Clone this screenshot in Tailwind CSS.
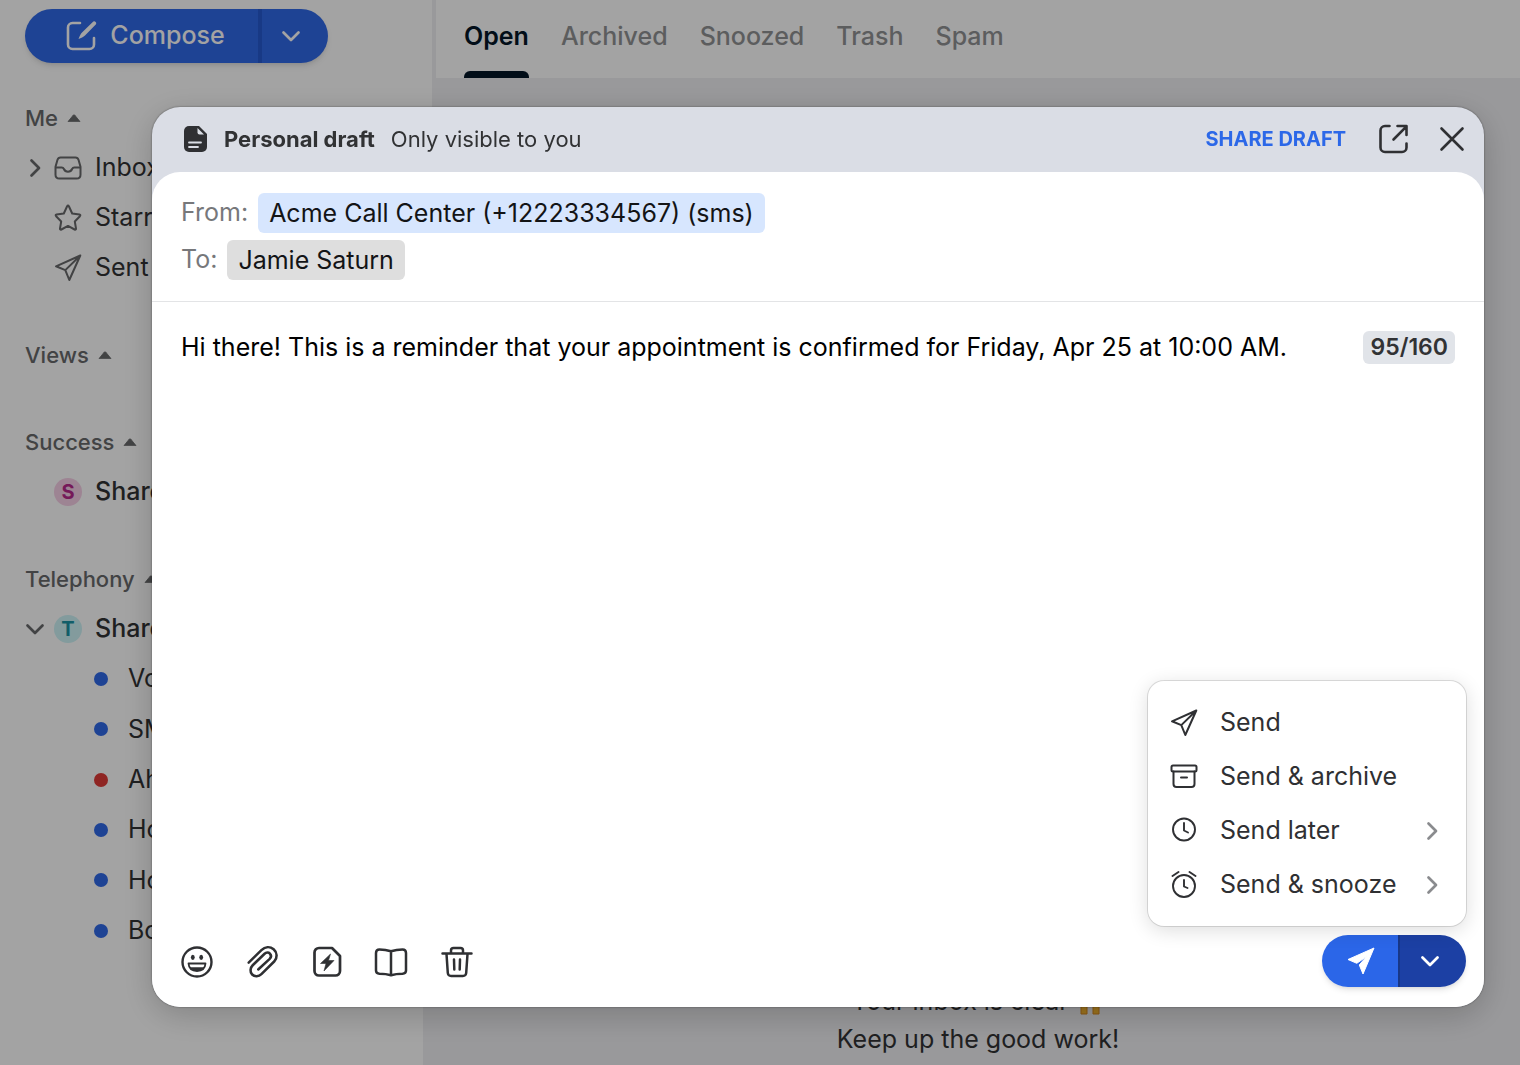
<!DOCTYPE html>
<html lang="en">
<head>
    <meta charset="UTF-8">
    <meta name="viewport" content="width=device-width, initial-scale=1.0">
    <title>Inbox</title>
    <script src="https://cdn.jsdelivr.net/npm/@tailwindcss/browser@4"></script>
</head>
<body class="bg-white font-['Inter',sans-serif] text-[25px] text-[#313234]">

<!-- shared icons -->
<svg class="hidden">
    <symbol id="chevron" viewBox="0 0 20 20"><path d="M2.5 6.5 10 14l7.5-7.5" fill="none" stroke="currentColor" stroke-width="2.7" stroke-linecap="round" stroke-linejoin="round"/></symbol>
    <symbol id="caret" viewBox="0 0 14 8"><path d="M1 7.6 6.2 1.2q.8-.8 1.6 0L13 7.6Z" fill="currentColor" stroke="currentColor" stroke-width=".8" stroke-linejoin="round"/></symbol>
    <symbol id="plane" viewBox="0 0 28 28"><path d="M26.300 1.500 2 12.300l9.300 3.800L15.300 26Z M26.300 1.500 11.300 16.100" fill="none" stroke="currentColor" stroke-width="2" stroke-linejoin="round"/></symbol>
</svg>

<div class="flex h-screen overflow-hidden">
    <aside class="w-[432px] shrink-0 pt-[9px] pl-[25px]">
        <div class="flex h-[54px] w-[303px] rounded-full bg-[#3069e8] text-white shadow-md">
            <button class="flex flex-1 items-center justify-center gap-3 border-r-4 border-[#265ad0] pl-2 text-[25px] font-medium">
                <svg class="size-8" viewBox="0 0 32 32" fill="none" stroke="currentColor" stroke-width="2.600" stroke-linecap="round" stroke-linejoin="round">
                    <path d="M14 3H6.500A4.500 4.500 0 0 0 2 7.500v17A4.500 4.500 0 0 0 6.500 29h17a4.500 4.500 0 0 0 4.500-4.500V18"/>
                    <path d="M27.300 1.600 16 12.500c-1.500 1.500-2.600 4-3.500 6.500 2.500-.9 5-2 6.500-3.500L30 4.300a2 2 0 0 0-2.700-2.700Z" fill="currentColor" stroke="none"/>
                </svg>
                Compose
            </button>
            <button class="flex w-[66px] items-center justify-center pr-2" aria-label="More compose options">
                <svg class="size-5"><use href="#chevron"/></svg>
            </button>
        </div>

        <nav class="mt-[30px] flex flex-col gap-[37px]">
            <section>
                <h2 class="flex h-[50px] items-center gap-[9px] text-[22px] font-medium text-[#68696b]">Me <svg class="h-2 w-[14px]"><use href="#caret"/></svg></h2>
                <ul>
                    <li><a href="#" class="flex h-[50px] items-center">
                        <svg class="size-5 -rotate-90 text-[#68696b]"><use href="#chevron"/></svg>
                        <svg class="mr-3 ml-2 size-[30px] text-[#68696b]" viewBox="0 0 30 30" fill="none" stroke="currentColor" stroke-width="2" stroke-linejoin="round">
                            <path d="M7.500 4.500h15q2.300 0 3 2.200l2 7v8q0 3.800-3.800 3.800H6.300q-3.800 0-3.800-3.800v-8l2-7q.7-2.200 3-2.200Z"/>
                            <path d="M2.500 14.500h6.200q1.500 0 2.200 1.500c1.500 3.600 6.700 3.600 8.200 0q.7-1.500 2.200-1.500h6.200"/>
                        </svg>Inbox</a></li>
                    <li><a href="#" class="flex h-[50px] items-center gap-3 pl-7">
                        <svg class="size-[30px] text-[#68696b]" viewBox="0 0 30 30" fill="none" stroke="currentColor" stroke-width="2" stroke-linejoin="round">
                            <path d="M14 3.500q1-1.800 2 0l3.200 7 7.200 1q1.600.4.500 1.700l-5.100 5.300 1.200 7q.1 1.600-1.400 1L15 22.900l-6.600 3.600q-1.500.6-1.400-1l1.200-7-5.100-5.300q-1.100-1.300.5-1.700l7.200-1Z"/>
                        </svg>Starred</a></li>
                    <li><a href="#" class="flex h-[50px] items-center gap-3 pl-7">
                        <svg class="mx-px size-7 text-[#68696b]"><use href="#plane"/></svg>Sent</a></li>
                </ul>
            </section>
            <section>
                <h2 class="flex h-[50px] items-center gap-[9px] text-[22px] font-medium text-[#68696b]">Views <svg class="h-2 w-[14px]"><use href="#caret"/></svg></h2>
            </section>
            <section>
                <h2 class="flex h-[50px] items-center gap-[9px] text-[22px] font-medium text-[#68696b]">Success <svg class="h-2 w-[14px]"><use href="#caret"/></svg></h2>
                <a href="#" class="flex h-[50px] items-center gap-3 pl-7 font-medium">
                    <span class="mx-px flex size-7 items-center justify-center rounded-full bg-[#f6cfe6] text-[20px] font-bold text-[#b8288c]">S</span>Shared</a>
            </section>
            <section>
                <h2 class="flex h-[50px] items-center gap-[9px] text-[22px] font-medium text-[#68696b]">Telephony <svg class="h-2 w-[14px]"><use href="#caret"/></svg></h2>
                <a href="#" class="flex h-[50px] items-center font-medium">
                    <svg class="size-5 text-[#68696b]"><use href="#chevron"/></svg>
                    <span class="mr-[13px] ml-[9px] flex size-7 items-center justify-center rounded-full bg-[#cdf3f6] text-[20px] font-bold text-[#1c94a4]">T</span>Shared</a>
                <ul class="grid h-[302px] grid-rows-6">
                    <li><a href="#" class="flex h-full items-center gap-5 pl-[69px]"><span class="size-[14px] rounded-full bg-[#3069e8]"></span>Voicemail</a></li>
                    <li><a href="#" class="flex h-full items-center gap-5 pl-[69px]"><span class="size-[14px] rounded-full bg-[#3069e8]"></span>SMS</a></li>
                    <li><a href="#" class="flex h-full items-center gap-5 pl-[69px]"><span class="size-[14px] rounded-full bg-[#e03a38]"></span>Ahmed</a></li>
                    <li><a href="#" class="flex h-full items-center gap-5 pl-[69px]"><span class="size-[14px] rounded-full bg-[#3069e8]"></span>Holly</a></li>
                    <li><a href="#" class="flex h-full items-center gap-5 pl-[69px]"><span class="size-[14px] rounded-full bg-[#3069e8]"></span>Howard</a></li>
                    <li><a href="#" class="flex h-full items-center gap-5 pl-[69px]"><span class="size-[14px] rounded-full bg-[#3069e8]"></span>Bonnie</a></li>
                </ul>
            </section>
        </nav>
    </aside>

    <main class="flex flex-1 flex-col bg-[#efeff2]">
        <nav class="ml-1 flex h-[78px] gap-8 bg-white pl-7 text-[25px] leading-8 font-medium text-[#919294]">
            <a href="#" class="flex flex-col justify-between pt-5 font-semibold text-[#041628]">Open<span class="h-[7px] rounded-t-md bg-[#041628]"></span></a>
            <a href="#" class="pt-5">Archived</a>
            <a href="#" class="pt-5">Snoozed</a>
            <a href="#" class="pt-5">Trash</a>
            <a href="#" class="pt-5">Spam</a>
        </nav>
        <div class="mt-auto -ml-[9px] bg-[#efeff2] pt-[120px] pb-[7px] pl-[13px] text-center leading-[38px]">
            <p class="flex items-center justify-center gap-[6px]">Your inbox is clear
                <svg class="h-7 w-[30px]" viewBox="0 0 30 28" fill="#f5b52e" stroke="#d98a1c"><path d="M3 2h10v14l-1 4v7H6v-7l-3-4ZM27 2H17v14l1 4v7h6v-7l3-4Z"/></svg>
            </p>
            <p>Keep up the good work!</p>
        </div>
    </main>
</div>

<div class="fixed inset-0 flex bg-black/36 pt-[107px] pr-9 pb-[58px] pl-[152px]">
    <div role="dialog" aria-label="Personal draft" class="flex flex-1 flex-col overflow-hidden rounded-[28px] bg-[#dadde5] shadow-[0_0_2px_rgba(0,0,0,0.5),0_8px_32px_rgba(0,0,0,0.2)]">
        <header class="flex h-[65px] items-center pr-[18px] pb-px pl-[31px] text-[22px]">
            <svg class="mr-[17px] h-[26px] w-6" viewBox="0 0 24 26">
                <path d="M6 0h10l8 8v13a5 5 0 0 1-5 5H6a5 5 0 0 1-5-5V5a5 5 0 0 1 5-5Z" fill="#2f3033"/>
                <path d="M14.500 2v4.500a2 2 0 0 0 2 2H21Z" fill="#dadde5"/>
                <path d="M6 16.500h12M6 21h9" stroke="#dadde5" stroke-width="1.800" stroke-linecap="round"/>
            </svg>
            <h1 class="font-bold">Personal draft</h1>
            <span class="ml-4">Only visible to you</span>
            <button class="ml-auto text-[20px] font-bold text-[#2c68e8]">SHARE DRAFT</button>
            <button class="ml-8" aria-label="Open in new window">
                <svg class="size-8" viewBox="0 0 32 32" fill="none" stroke="#2f3033" stroke-width="2.600" stroke-linecap="round" stroke-linejoin="round">
                    <path d="M11.500 3H7a4.500 4.500 0 0 0-4.500 4.500v17A4.500 4.500 0 0 0 7 29h17a4.500 4.500 0 0 0 4.500-4.500V20.500M15.500 16.500 28.500 3.300M19.500 3h9v9"/>
                </svg>
            </button>
            <button class="ml-7" aria-label="Close">
                <svg class="size-7" viewBox="0 0 28 28" stroke="#2f3033" stroke-width="2.600" stroke-linecap="round"><path d="m3.500 3.500 21 21M24.500 3.500l-21 21"/></svg>
            </button>
        </header>

        <div class="flex flex-1 flex-col rounded-t-[28px] bg-white">
            <div class="flex flex-col gap-[7px] border-b border-[#e3e4e6] px-[29px] pt-[21px] pb-[21px]">
                <div class="flex h-10 items-center gap-[10px]">
                    <span class="text-[#77787b]">From:</span>
                    <button class="h-10 rounded-md bg-[#d7e6fe] px-[11px] pt-px text-[#131416]">Acme Call Center (+12223334567) (sms)</button>
                </div>
                <div class="flex h-10 items-center gap-[10px]">
                    <span class="text-[#77787b]">To:</span>
                    <button class="h-10 rounded-md bg-[#dedede] px-[11px] pt-px text-[#131416]">Jamie Saturn</button>
                </div>
            </div>

            <div class="flex flex-1 items-start px-[29px] pt-[29px]">
                <textarea aria-label="Message" class="h-full flex-1 resize-none leading-[33px] text-black outline-none">Hi there! This is a reminder that your appointment is confirmed for Friday, Apr 25 at 10:00 AM.</textarea>
                <span class="rounded-md bg-[#e1e4e9] px-[7px] text-[23px] leading-[33px] font-semibold">95/160</span>
            </div>

            <footer class="flex items-center pr-[18px] pb-5 pl-7 text-[#2f3033]">
                <button aria-label="Emoji">
                    <svg class="size-[34px]" viewBox="0 0 34 34" fill="none" stroke="currentColor" stroke-width="2.400">
                        <circle cx="17" cy="18" r="14.500"/>
                        <ellipse cx="12.800" cy="13.300" rx="1.900" ry="2.600" fill="currentColor" stroke="none"/><ellipse cx="21.200" cy="13.300" rx="1.900" ry="2.600" fill="currentColor" stroke="none"/>
                        <path d="M8.500 19.500h17c-.4 5-4 7.500-8.500 7.500s-8.100-2.500-8.500-7.500Z" stroke-width="1.800" stroke-linejoin="round"/>
                        <path d="M9.500 23.300h15C23 26 20.500 27 17 27s-6-1-7.500-3.700Z" fill="currentColor" stroke="none"/>
                    </svg>
                </button>
                <button class="ml-8" aria-label="Attach file">
                    <svg class="size-[34px]" viewBox="0 0 32 32" fill="none" stroke="currentColor" stroke-width="2.400" stroke-linecap="round" stroke-linejoin="round">
                        <path d="M2.500 17.500 14.500 5.800C18 2.400 22.500 2 26 5s3.800 8 .5 11.500L14.500 28.300c-2.500 2.500-6.500 2.600-8.700.4s-2-6.200.5-8.700L17.500 9.200c1.500-1.500 3.800-1.500 5-.2s1.300 3.400-.2 5L11.500 24"/>
                    </svg>
                </button>
                <button class="ml-[30px]" aria-label="Insert template">
                    <svg class="size-[34px]" viewBox="0 0 34 34" fill="none" stroke="currentColor" stroke-width="2.700" stroke-linejoin="round">
                        <path d="M9 4h13l8 8v15a4.500 4.500 0 0 1-4.500 4.500H9A4.500 4.500 0 0 1 4.500 27V8.500A4.500 4.500 0 0 1 9 4Z"/>
                        <path d="M20.500 10 10.500 19.500H16L14 27l10-10.500h-5.500Z" fill="currentColor" stroke-width=".6"/>
                    </svg>
                </button>
                <button class="ml-[30px]" aria-label="Knowledge base">
                    <svg class="size-[34px]" viewBox="0 0 34 34" fill="none" stroke="currentColor" stroke-width="2.500" stroke-linejoin="round">
                        <path d="M17 7.300C13 6 9 5.500 5.500 5.500q-3.500 0-3.500 3.500v17.500q0 3 3.500 3.200c4.500 0 7.500.3 11.500 1.500 4-1.200 7-1.500 11.500-1.500q3.500-.2 3.500-3.200V9q0-3.500-3.500-3.500c-3.500 0-7.500.5-11.500 1.800Zm0 0v23.900"/>
                    </svg>
                </button>
                <button class="ml-8" aria-label="Delete draft">
                    <svg class="size-[34px]" viewBox="0 0 34 34" fill="none" stroke="currentColor" stroke-width="2.500" stroke-linecap="round" stroke-linejoin="round">
                        <path d="M2.500 9.500h29M11 9V6.500Q11 4 13.500 4h7Q23 4 23 6.500V9M6.500 10l1.300 19q.3 3 3.300 3h11.800q3 0 3.300-3l1.300-19M14 15.500l.3 10M20 15.500l-.3 10"/>
                    </svg>
                </button>

                <div class="relative ml-auto">
                    <div class="flex h-[52px] overflow-hidden rounded-full text-white shadow-md">
                        <button class="flex w-[76px] items-center justify-center bg-[#2b66e8] pl-[2px]" aria-label="Send">
                            <svg class="size-7" viewBox="0 0 28 28"><path d="M27 1 1 12.500 9.800 16.300 19.500 9.500 12.300 18 16 27Z" fill="currentColor" stroke="currentColor" stroke-linejoin="round"/></svg>
                        </button>
                        <button class="flex w-[68px] items-center justify-center border-l-2 border-[#183788] bg-[#1c40a4] pr-[6px]" aria-label="More send options">
                            <svg class="size-5"><use href="#chevron"/></svg>
                        </button>
                    </div>

                    <div role="menu" class="absolute right-0 bottom-[61px] w-[318px] rounded-2xl bg-white pt-[15px] pb-[14px] shadow-[0_0_0_1px_rgba(0,0,0,0.12),0_4px_20px_rgba(0,0,0,0.14)]">
                        <button role="menuitem" class="flex h-[54px] w-full items-center pr-6 pl-[22px]">
                            <svg class="mr-[22px] size-7"><use href="#plane"/></svg>Send
                        </button>
                        <button role="menuitem" class="flex h-[54px] w-full items-center pr-6 pl-[22px]">
                            <svg class="mr-[22px] size-7" viewBox="0 0 28 28" fill="none" stroke="currentColor" stroke-width="2" stroke-linejoin="round" stroke-linecap="round">
                                <rect x="1.500" y="2.500" width="25" height="6" rx="1.500"/><path d="M3.500 8.500v12.500a3 3 0 0 0 3 3h15a3 3 0 0 0 3-3V8.500M11 14.500h6"/>
                            </svg>Send &amp; archive
                        </button>
                        <button role="menuitem" class="flex h-[54px] w-full items-center pr-6 pl-[22px]">
                            <svg class="mr-[22px] size-7" viewBox="0 0 28 28" fill="none" stroke="currentColor" stroke-width="1.900" stroke-linecap="round" stroke-linejoin="round">
                                <circle cx="14" cy="12.500" r="11"/><path d="M14 6v7.500l4 2"/>
                            </svg>Send later
                            <svg class="ml-auto size-5 -rotate-90 text-[#8a8b8e]"><use href="#chevron"/></svg>
                        </button>
                        <button role="menuitem" class="flex h-[54px] w-full items-center pr-6 pl-[22px]">
                            <svg class="mr-[22px] size-7" viewBox="0 0 28 28" fill="none" stroke="currentColor" stroke-width="1.900" stroke-linecap="round" stroke-linejoin="round">
                                <circle cx="14" cy="15" r="11"/><path d="M14 9v6.500l3.500 1.500M2.500 5 8.500 1M25.500 5 19.500 1"/>
                            </svg>Send &amp; snooze
                            <svg class="ml-auto size-5 -rotate-90 text-[#8a8b8e]"><use href="#chevron"/></svg>
                        </button>
                    </div>
                </div>
            </footer>
        </div>
    </div>
</div>

</body>
</html>
